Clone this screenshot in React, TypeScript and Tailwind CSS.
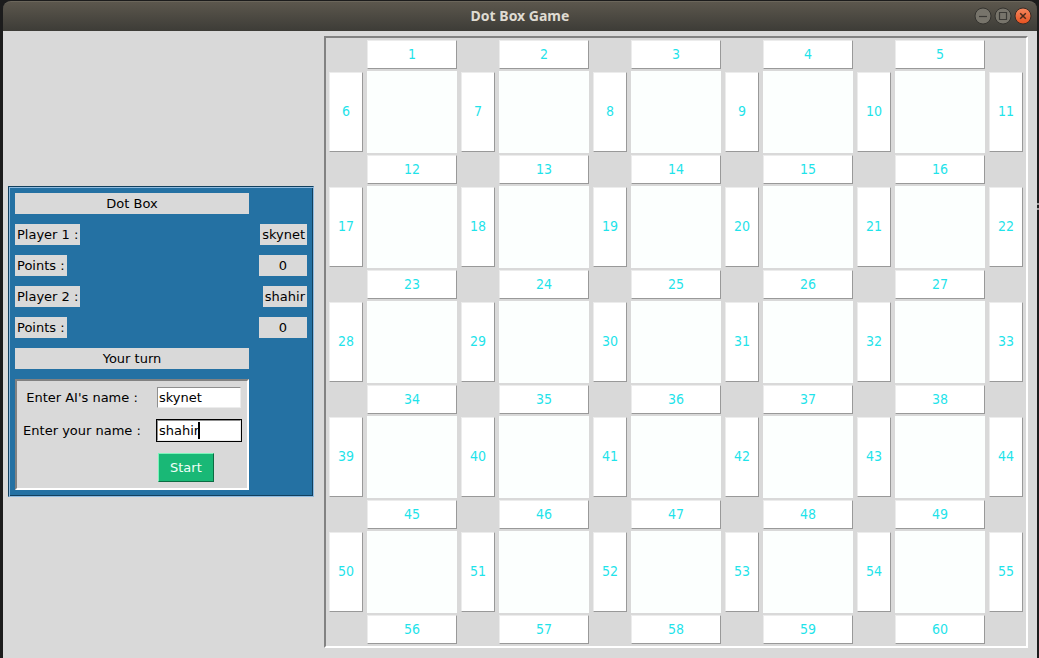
import React, { useState } from "react";

const COLS = 5;
const ROWS = 5;
const STRIDE = COLS * 2 + 1;

const label = "bg-[#d9d9d9] px-0.5 h-[21px] leading-[21px] whitespace-nowrap";
const edge =
  "border border-t-[#ececec] border-l-[#ececec] border-r-[#999999] border-b-[#999999] bg-white pb-0.5 text-[#1fe3ea] text-center leading-none";

function TitleBar() {
  return (
    <header className="grid h-[30px] grid-cols-[1fr_auto_1fr] items-center rounded-t-lg border-t border-[#6b665b] bg-linear-to-b from-[#5c574d] to-[#3d3c37] px-[5px] pb-px">
      <span />
      <h1 className="font-['Noto_Sans',sans-serif] text-sm font-bold text-[#dfdbd2]">Dot Box Game</h1>
      <div className="flex justify-end gap-0.5">
        <button aria-label="Minimize" className="block">
          <svg width="18" height="18" viewBox="0 0 18 18">
            <circle cx="9" cy="9" r="8" fill="#77746b" stroke="#34332f" />
            <path d="M5 9.5h8" stroke="#3b3a36" strokeWidth="1.2" />
          </svg>
        </button>
        <button aria-label="Maximize" className="block">
          <svg width="18" height="18" viewBox="0 0 18 18">
            <circle cx="9" cy="9" r="8" fill="#77746b" stroke="#34332f" />
            <path d="M5.5 5.5h7v7h-7z" fill="none" stroke="#3b3a36" strokeWidth="1.2" />
          </svg>
        </button>
        <button aria-label="Close" className="block">
          <svg width="18" height="18" viewBox="0 0 18 18">
            <defs>
              <linearGradient id="close" x1="0" y1="0" x2="0" y2="1">
                <stop offset="0" stopColor="#f7885f" />
                <stop offset="1" stopColor="#e5511f" />
              </linearGradient>
            </defs>
            <circle cx="9" cy="9" r="8" fill="url(#close)" stroke="#3a2b24" />
            <path d="M6.2 6.2l5.6 5.6M11.8 6.2l-5.6 5.6" stroke="#4a2a1c" strokeWidth="1.5" />
          </svg>
        </button>
      </div>
    </header>
  );
}

function ScorePanel() {
  const [ai, setAi] = useState("skynet");
  const [human, setHuman] = useState("shahir");
  const field =
    "h-[21px] w-full border border-t-[#8f8f8f] border-l-[#8f8f8f] border-r-[#ececec] border-b-[#ececec] bg-white px-px leading-none outline-none";
  return (
    <section className="mb-px grid shrink-0 grid-cols-[234px_minmax(48px,auto)] items-center gap-2.5 border border-t-[#12405e] border-l-[#12405e] border-r-[#8fbbe0] border-b-[#8fbbe0] bg-[#2471a3] p-1.5 shadow-[inset_1px_1px_0_#8fbbe0,inset_-1px_-1px_0_#12405e]">
      <h2 className={`${label} text-center`}>Dot Box</h2>
      <span />
      <span className={`${label} justify-self-start`}>Player 1 :</span>
      <output className={`${label} justify-self-end`}>{ai}</output>
      <span className={`${label} justify-self-start`}>Points :</span>
      <output className={`${label} text-center`}>0</output>
      <span className={`${label} justify-self-start`}>Player 2 :</span>
      <output className={`${label} justify-self-end`}>{human}</output>
      <span className={`${label} justify-self-start`}>Points :</span>
      <output className={`${label} text-center`}>0</output>
      <p className={`${label} text-center`}>Your turn</p>
      <span />
      <form
        onSubmit={(e) => e.preventDefault()}
        className="grid grid-cols-[1fr_86px] items-center gap-x-2.5 gap-y-2.5 border-2 border-t-[#828282] border-l-[#828282] border-r-white border-b-white bg-[#d9d9d9] p-[5px]"
      >
        <label htmlFor="ai" className="pr-1 text-center whitespace-nowrap leading-5">Enter AI's name :</label>
        <div className="border border-[#d9d9d9]">
          <input id="ai" className={`${field} block`} value={ai} onChange={(e) => setAi(e.target.value)} />
        </div>
        <label htmlFor="human" className="pr-1 text-center whitespace-nowrap leading-5">Enter your name :</label>
        <div className="relative border border-black">
          <input
            id="human"
            className={`${field} block caret-transparent`}
            value={human}
            onChange={(e) => setHuman(e.target.value)}
          />
          <span className="absolute top-0.5 left-[41px] h-[17px] w-0.5 bg-black" />
        </div>
        <span />
        <button
          type="submit"
          className="my-px ml-0.5 h-[29px] justify-self-start border border-t-[#7df5bb] border-l-[#7df5bb] border-r-[#0c6b43] border-b-[#0c6b43] bg-[#19b876] px-[11px] leading-5 text-[#f0fff8]"
        >
          Start
        </button>
      </form>
    </section>
  );
}

function Board() {
  const cells: React.ReactNode[] = [];
  for (let r = 0; r <= ROWS; r++) {
    for (let c = 0; c <= COLS; c++) {
      cells.push(<span key={`dot-${r}-${c}`} />);
      if (c < COLS) {
        const n = r * STRIDE + c + 1;
        cells.push(
          <button key={n} className={`${edge} mx-px my-px h-[29px]`}>{n}</button>
        );
      }
    }
    if (r === ROWS) break;
    for (let c = 0; c <= COLS; c++) {
      const n = r * STRIDE + COLS + c + 1;
      cells.push(
        <button key={n} className={`${edge} mx-[3px] my-0.5 h-20`}>{n}</button>
      );
      if (c < COLS) cells.push(<div key={`box-${r}-${c}`} className="m-px bg-[#fcfffe]" />);
    }
  }
  return (
    <section className="grid min-w-0 flex-1 grid-cols-[repeat(5,40px_minmax(0,1fr))_40px] border-2 border-t-[#828282] border-l-[#828282] border-r-white border-b-white bg-[#d9d9d9] py-px font-['DejaVu_Sans_Condensed','DejaVu_Sans',sans-serif] text-sm">
      {cells}
    </section>
  );
}

export default function App() {
  return (
    <div className="relative flex min-h-screen flex-col bg-[#1c1c1c] pt-px pr-0.5 pl-[3px] font-['DejaVu_Sans',sans-serif] text-[13px] text-black">
      <TitleBar />
      <main className="flex flex-1 items-start bg-[#d9d9d9] pt-[5px] pr-[9px] pb-2.5 pl-[5px]">
        <div className="flex min-w-0 flex-1 items-center gap-2.5">
          <ScorePanel />
          <Board />
        </div>
      </main>
      <span className="absolute top-[203px] right-0 h-[7px] w-0.5 border-y-2 border-[#999999]" />
    </div>
  );
}
